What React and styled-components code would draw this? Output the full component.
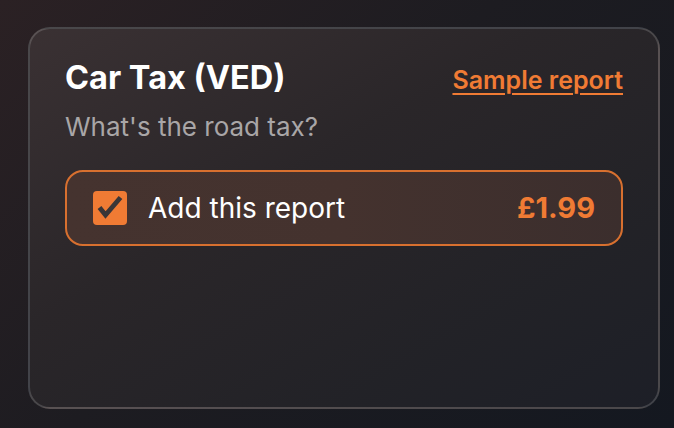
import React from "react";
import styled, { createGlobalStyle } from "styled-components";

const GlobalStyle = createGlobalStyle`
  html, body {
    margin: 0;
    padding: 0;
    height: 100%;
  }
  body {
    font-family: Inter, "Noto Sans", sans-serif;
    background: linear-gradient(135deg, #2b2124 0%, #1d1c21 45%, #141820 100%);
    -webkit-font-smoothing: antialiased;
  }
`;

const Page = styled("div")`
  width: 674px;
  height: 428px;
  box-sizing: border-box;
  padding: 27px 14px 19px 28px;
  display: flex;
`;

const Card = styled("div")`
  flex: 1;
  box-sizing: border-box;
  border: 2px solid rgba(255, 255, 255, 0.16);
  border-radius: 22px;
  background: linear-gradient(150deg, #3a3133 0%, #2a2629 40%, #222227 75%, #1d1f27 100%);
  padding: 31px 35px;
  display: flex;
  flex-direction: column;
`;

const Header = styled("div")`
  display: flex;
  justify-content: space-between;
  align-items: baseline;
`;

const Title = styled("h3")`
  margin: 0;
  color: #ffffff;
  font-size: 32.5px;
  font-weight: 700;
  letter-spacing: 0;
  line-height: 36px;
`;

const SampleLink = styled("a")`
  color: #f07b34;
  font-size: 25px;
  font-weight: 600;
  line-height: 36px;
  text-decoration: underline;
  text-underline-offset: 4px;
  text-decoration-thickness: 2px;
  cursor: pointer;
`;

const Subtitle = styled("p")`
  margin: 14px 0 0;
  color: #a9a6a7;
  font-size: 26px;
  line-height: 30px;
`;

const Option = styled("label")`
  margin-top: 28px;
  height: 76px;
  box-sizing: border-box;
  border: 2px solid #d8702f;
  border-radius: 18px;
  background: linear-gradient(90deg, #45332f 0%, #44322e 50%, #3b2e2d 100%);
  display: flex;
  align-items: center;
  padding: 0 26px 0 26px;
  cursor: pointer;
`;

const Box = styled("span")`
  width: 34px;
  height: 34px;
  border-radius: 4px;
  background: ${p => (p.checked ? "#f07b34" : "transparent")};
  border: ${p => (p.checked ? "none" : "2px solid #888")};
  display: flex;
  align-items: center;
  justify-content: center;
  flex-shrink: 0;
`;

const OptionLabel = styled("span")`
  margin-left: 21px;
  color: #ffffff;
  font-size: 28px;
  line-height: 34px;
  flex: 1;
`;

const Price = styled("span")`
  color: #f07b34;
  font-size: 29px;
  font-weight: 700;
  line-height: 34px;
`;

export default function App() {
  return (
    <>
      <GlobalStyle />
      <Page>
        <Card>
          <Header>
            <Title>Car Tax (VED)</Title>
            <SampleLink>Sample report</SampleLink>
          </Header>
          <Subtitle>What's the road tax?</Subtitle>
          <Option>
            <Box checked>
              <svg width="34" height="34" viewBox="0 0 34 34">
                <path
                  d="M6.5 16.5 L12.5 24 L27.5 6.5"
                  fill="none"
                  stroke="#3a3637"
                  strokeWidth="4.8"
                  strokeLinecap="butt"
                  strokeLinejoin="miter"
                />
              </svg>
            </Box>
            <OptionLabel>Add this report</OptionLabel>
            <Price>£1.99</Price>
          </Option>
        </Card>
      </Page>
    </>
  );
}
